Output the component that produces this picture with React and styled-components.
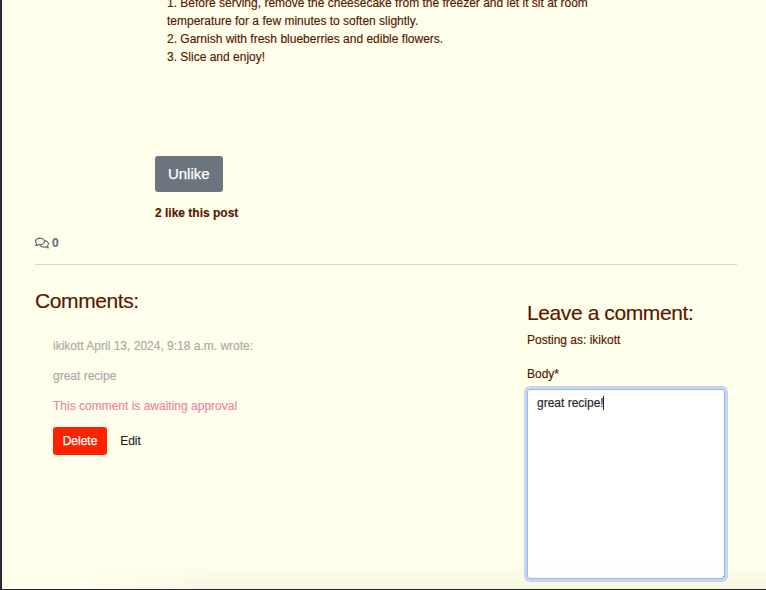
import React from "react";
import styled, { createGlobalStyle } from "styled-components";
import { FaRegComments } from "react-icons/fa";

const GlobalStyle = createGlobalStyle`
  *, *::before, *::after { box-sizing: border-box; }
  body {
    margin: 0;
    overflow: hidden;
    background: #ffffec;
    color: #581600;
    font: 12px/18px "Liberation Sans", Arial, sans-serif;
    -webkit-text-stroke: 0.15px;
  }
  h3, p, ol { margin: 0; padding: 0; }
`;

const Page = styled.div`
  height: 590px;
  overflow: hidden;
  border-left: 2px solid #292c35;
  border-bottom: 1px solid #20262a;
  padding: 0 29px 0 33px;
  background:
    linear-gradient(to right, #ffffec 80px, transparent 210px) 0 100% / 100% 28px no-repeat,
    linear-gradient(to top, rgba(60, 65, 40, 0.05), transparent 24px) 0 100% / 100% 24px no-repeat,
    #ffffec;
`;

const Steps = styled.ol`
  list-style: none;
  margin: -6px 0 0 132px;
  width: 440px;
`;

const Likes = styled.section`
  margin: 90px 0 0 120px;
`;

const Button = styled.button`
  display: block;
  border: 0;
  border-radius: 3px;
  padding: 0 0 ${(p) => p.$lift || "0"};
  color: ${(p) => p.$color || "#fff"};
  background: ${(p) => p.$background || "transparent"};
  width: ${(p) => p.$width};
  height: ${(p) => p.$height};
  font: ${(p) => p.$size || "12px"} "Liberation Sans", Arial, sans-serif;
  -webkit-text-stroke: ${(p) => p.$stroke || "0.15px"};
`;

const LikeCount = styled.p`
  margin-top: 12px;
  font-weight: 700;
`;

const CommentCount = styled.div`
  display: flex;
  align-items: center;
  gap: 3px;
  height: 18px;
  margin-top: 12px;
  color: #66717b;
  font-weight: 700;
  svg { width: 14px; height: 14px; }
`;

const Divider = styled.hr`
  height: 1px;
  margin: 12px 0 0;
  border: 0;
  background: #e6d3c3;
`;

const Columns = styled.div`
  display: grid;
  grid-template-columns: 492px 200px;
`;

const Title = styled.h3`
  font-size: 21px;
  font-weight: 400;
  line-height: 24px;
  letter-spacing: -0.4px;
  white-space: nowrap;
`;

const Comments = styled.section`
  padding-top: 24px;
`;

const Comment = styled.article`
  display: grid;
  gap: 12px;
  padding: 24px 0 0 18px;
  color: #a9aaa7;
`;

const Pending = styled.p`
  color: #ee85a4;
`;

const Actions = styled.div`
  display: flex;
`;

const Form = styled.form`
  padding-top: 36px;
`;

const Posting = styled.p`
  margin-top: 6px;
`;

const Label = styled.label`
  display: block;
  margin-top: 16px;
`;

const Field = styled.div`
  position: relative;
  width: 198px;
  height: 190px;
  margin-top: 6px;
  padding: 4px 9px;
  border: 1px solid #91b9f9;
  border-radius: 3px;
  box-shadow: 0 0 0 3px #c5d4ef;
  background: linear-gradient(#fff 90%, #fcfcfc);
  color: #212529;
`;

const Caret = styled.span`
  display: inline-block;
  width: 1px;
  height: 14px;
  margin-left: -1px;
  vertical-align: -3px;
  background: #212529;
`;

const Grip = styled.span`
  position: absolute;
  right: 0;
  bottom: 1px;
  width: 1px;
  height: 1px;
  background: #777;
`;

export default function App() {
  return (
    <>
      <GlobalStyle />
      <Page>
        <Steps>
          <li>
            1. Before serving, remove the cheesecake from the freezer and let it sit at room
            <br />
            temperature for a few minutes to soften slightly.
          </li>
          <li>2. Garnish with fresh blueberries and edible flowers.</li>
          <li>3. Slice and enjoy!</li>
        </Steps>
        <Likes>
          <Button $background="#6c757d" $width="67.5px" $height="36px" $size="15px" $stroke="0.25px" $lift="2px">
            Unlike
          </Button>
          <LikeCount>2 like this post</LikeCount>
        </Likes>
        <CommentCount>
          <FaRegComments />
          <span>0</span>
        </CommentCount>
        <Divider />
        <Columns>
          <Comments>
            <Title>Comments:</Title>
            <Comment>
              <p>ikikott April 13, 2024, 9:18 a.m. wrote:</p>
              <p>great recipe</p>
              <Pending>This comment is awaiting approval</Pending>
              <Actions>
                <Button $background="#ff2200" $width="54px" $height="28px" $stroke="0.25px">Delete</Button>
                <Button $color="#212529" $width="47px" $height="28px">Edit</Button>
              </Actions>
            </Comment>
          </Comments>
          <Form>
            <Title>Leave a comment:</Title>
            <Posting>Posting as: ikikott</Posting>
            <Label>Body*</Label>
            <Field role="textbox" aria-label="Body">
              great recipe!<Caret />
              <Grip />
            </Field>
          </Form>
        </Columns>
      </Page>
    </>
  );
}
